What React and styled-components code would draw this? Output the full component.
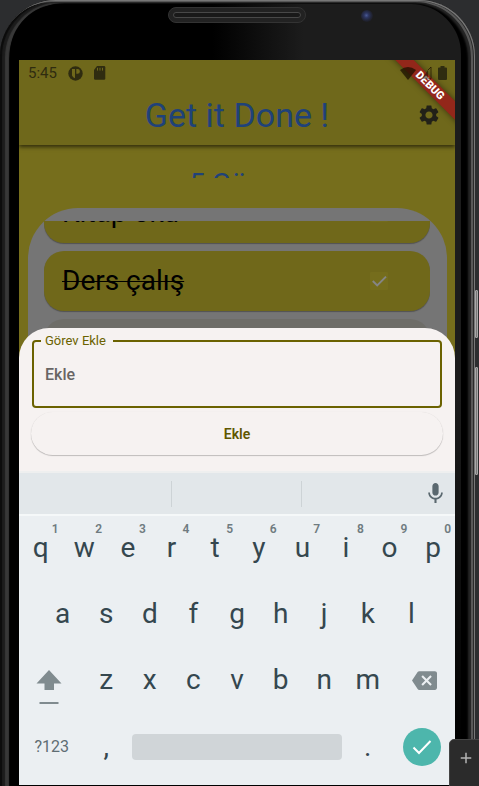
import React from "react";
import styled, { createGlobalStyle } from "styled-components";
import { MdAdd, MdBackspace, MdMic, MdSettings } from "react-icons/md";

const GlobalStyle = createGlobalStyle`
  * {
    box-sizing: border-box;
  }
  body {
    margin: 0;
    background: #2c2d2f;
    font-family: Roboto, sans-serif;
  }
  button,
  input {
    font: inherit;
    color: inherit;
  }
  button {
    border: 0;
    padding: 0;
    background: none;
    cursor: pointer;
  }
  svg {
    display: block;
  }
`;

const Emulator = styled.div`
  position: relative;
  min-height: 100vh;
  padding-right: 4px;
  overflow: hidden;
`;

const Phone = styled.div`
  padding: 4px 14px 0 10px;
  border-radius: 56px 56px 0 0;
  background: #000;
  box-shadow:
    inset -1px 1px 0 #777,
    inset -2px 1px 0 #2a2a2a,
    inset -4px 2px 0 #585858,
    inset -7px 3px 2px #262626,
    inset 2px 1px 1px #0c0c0c,
    inset 5px 2px 1px #1c1c1c,
    inset 9px 3px 1px #383838;
`;

const Face = styled.div`
  padding: 0 6px 1px 9px;
  border-radius: 50px 50px 0 0;
  background:
    linear-gradient(to bottom, transparent 50%, #000 95%),
    linear-gradient(to right, #000 45%, #1c1c1c 65%);
`;

const TopBezel = styled.div`
  display: grid;
  grid-template-columns: 1fr auto 1fr;
  align-items: start;
  height: 56px;
  padding-top: 3px;
`;

const Speaker = styled.div`
  grid-column: 2;
  width: 138px;
  height: 16px;
  padding: 4px;
  border: 1px solid #333;
  border-radius: 8px;
  background: #222;
`;

const SpeakerSlot = styled.div`
  height: 6px;
  border: 1px solid #484848;
  border-radius: 3px;
  background: #191919;
`;

const Camera = styled.div`
  width: 12px;
  height: 12px;
  margin: 3px 0 0 55px;
  border-radius: 50%;
  background: radial-gradient(circle at 45% 45%, #4a5a94 0, #2c3560 25%, #23273c 50%, #1c1c20 75%);
`;

const Screen = styled.main`
  position: relative;
  display: grid;
  overflow: hidden;
  background: #766e1c;
`;

const AppLayer = styled.div`
  grid-area: 1 / 1;
  align-self: start;
`;

const OverlayLayer = styled.div`
  grid-area: 1 / 1;
  z-index: 2;
  padding-top: 268px;
`;

const AppBar = styled.header`
  background: #6f681b;
  box-shadow: 0 2px 4px rgba(0, 0, 0, 0.6);
`;

const StatusBar = styled.div`
  position: relative;
  z-index: 1;
  display: flex;
  align-items: center;
  height: 26px;
  padding: 0 8px 0 9px;
  color: #2f2c10;
  font-size: 15px;
`;

const StatusIcons = styled.div`
  display: flex;
  align-items: center;
  gap: ${(p) => (p.$end ? "6px" : "9px")};
  margin-left: ${(p) => (p.$end ? "auto" : "11px")};
`;

const TitleRow = styled.div`
  display: grid;
  grid-template-columns: 1fr auto 1fr;
  align-items: center;
  height: 59px;
  padding: 0 14px 2px;
`;

const Title = styled.h1`
  grid-column: 2;
  margin: 0;
  color: #1f4279;
  font-size: 34px;
  font-weight: 400;
  line-height: 40px;
`;

const SettingsButton = styled.button`
  justify-self: end;
  color: #222118;
`;

const DebugBanner = styled.div`
  position: absolute;
  top: 19px;
  right: -35px;
  width: 120px;
  height: 13px;
  transform: rotate(45deg);
  background: #93271a;
  box-shadow: 0 0 6px rgba(0, 0, 0, 0.5);
  color: #fff;
  font-size: 11px;
  font-weight: 900;
  line-height: 13px;
  text-align: center;
`;

const Counter = styled.p`
  height: 8px;
  margin: 25px 0 30px;
  overflow: hidden;
  color: #1f4279;
  font-size: 28px;
  line-height: 28px;
  text-align: center;
`;

const Panel = styled.section`
  margin: 0 8px 0 9px;
  padding: 13px 17px 0 16px;
  border-radius: 50px 50px 0 0;
  background: #757575;
`;

const TaskList = styled.ul`
  display: flex;
  flex-direction: column;
  justify-content: flex-end;
  gap: 8px;
  height: 158px;
  margin: 0;
  padding: 0;
  overflow: hidden;
  list-style: none;
`;

const Task = styled.li`
  display: flex;
  flex: none;
  align-items: center;
  justify-content: space-between;
  height: 60px;
  padding: 0 42px 0 18px;
  border-radius: 20px;
  background: ${(p) => (p.$plain ? "#6e6d68" : "#70681a")};
  box-shadow: 0 1px 1px rgba(0, 0, 0, ${(p) => (p.$plain ? 0 : 0.3)});
  color: #000;
  font-size: 28px;
`;

const TaskName = styled.label`
  padding-bottom: 1px;
  text-decoration: ${(p) => (p.$done ? "line-through" : "none")};
  text-decoration-thickness: 1px;
`;

const Tick = styled.span`
  display: grid;
  width: 18px;
  height: 18px;

  > * {
    grid-area: 1 / 1;
  }
`;

const TickInput = styled.input`
  width: 18px;
  height: 18px;
  margin: 0;
  appearance: none;
  border-radius: 1px;
  background: #756d1c;
`;

const TickMark = styled.svg`
  pointer-events: none;
`;

const Sheet = styled.form`
  padding: 7px 12px 16px;
  border-radius: 30px 30px 0 0;
  background: #f6f2f1;
`;

const Field = styled.fieldset`
  min-width: 0;
  margin: 0 1px 4px;
  padding: 0 11px;
  border: 2px solid #6b6200;
  border-radius: 4px;
`;

const FieldLegend = styled.legend`
  margin-left: -4px;
  padding: 0 7px 0 4px;
  color: #6b6200;
  font-size: 13px;
  line-height: 12px;
`;

const FieldInput = styled.input`
  display: block;
  width: 100%;
  height: 59px;
  padding: 0 0 4px;
  border: 0;
  outline: 0;
  background: none;
  color: #333;
  font-size: 16px;
  font-weight: 500;

  &::placeholder {
    color: #686564;
    opacity: 1;
  }
`;

const SubmitButton = styled.button`
  display: block;
  width: 100%;
  height: 43px;
  border-radius: 22px;
  background: #f6f2f1;
  box-shadow: 0 1px 1px rgba(0, 0, 0, 0.22), 0 0 1px rgba(0, 0, 0, 0.1);
  color: #5f5700;
  font-size: 14px;
  font-weight: 600;
`;

const Keyboard = styled.section`
  padding-bottom: 5px;
  background: #ebeff2;
  color: #35474f;
`;

const Suggestions = styled.div`
  display: grid;
  grid-template-columns: 35% 30% 35%;
  align-items: center;
  height: 45px;
  border-top: 2px solid #eeefef;
  border-bottom: 2px solid #f5f8f9;
  background: #e2e7ea;
`;

const Suggestion = styled.div`
  display: flex;
  align-items: center;
  justify-content: flex-end;
  height: 26px;
  padding-right: 7px;
  border-right: 1px solid #cdd3d6;

  &:last-child {
    border-right: 0;
  }
`;

const MicButton = styled.button`
  color: #5a686f;
`;

const KeyRow = styled.div`
  display: grid;
  grid-template-columns: repeat(20, 1fr);
  height: 66px;
  padding-bottom: ${(p) => (p.$last ? "0" : "2px")};
`;

const Key = styled.button`
  position: relative;
  display: flex;
  flex-direction: column;
  align-items: center;
  justify-content: center;
  grid-column: ${(p) => (p.$start ? `${p.$start} / ` : "")} span ${(p) => p.$span || 2};
  padding: ${(p) => (p.$edge === "left" ? "0 5px 0 0" : p.$edge === "right" ? "0 0 0 5px" : "0")};
  color: ${(p) => (p.$muted ? "#5f6d73" : "inherit")};
  font-size: ${(p) => (p.$muted ? "16px" : "28px")};
  line-height: 28px;
`;

const Hint = styled.span`
  position: absolute;
  top: 6px;
  right: 4px;
  color: #6f7b80;
  font-size: 12px;
  font-weight: 600;
  line-height: 14px;
`;

const SpaceBar = styled.span`
  align-self: stretch;
  height: 26px;
  margin: 0 4px;
  border-radius: 4px;
  background: #d0d5d8;
`;

const EnterCircle = styled.span`
  display: grid;
  place-items: center;
  width: 38px;
  height: 38px;
  border-radius: 50%;
  background: #4db6ac;
`;

const SideButton = styled.div`
  position: absolute;
  top: ${(p) => p.$top};
  right: 1px;
  width: 3px;
  height: ${(p) => p.$length};
  border: 1px solid #a8a8a8;
  border-radius: 1px;
  background: #777;
`;

const ZoomButton = styled.button`
  position: absolute;
  right: -2px;
  bottom: -2px;
  z-index: 3;
  display: grid;
  place-items: center;
  width: 32px;
  height: 49px;
  padding: 0 0 12px 2px;
  border: 1px solid #444;
  border-radius: 5px 0 0 0;
  background: #2b2b2b;
  color: #b4b4b4;
`;

const TASKS = [
  { id: "kitap", name: "Kitap oku", done: false },
  { id: "ders", name: "Ders çalış", done: true },
  { id: "bos", name: "", plain: true },
];

function TaskItem({ id, name, done, plain }) {
  if (plain) return <Task $plain />;
  return (
    <Task>
      <TaskName htmlFor={id} $done={done}>
        {name}
      </TaskName>
      <Tick>
        <TickInput id={id} type="checkbox" defaultChecked={done} />
        {done && (
          <TickMark width="18" height="18" viewBox="0 0 18 18" fill="none" stroke="#858585" strokeWidth="2">
            <path d="M2.8 9 7.2 13.4 16 4.6" />
          </TickMark>
        )}
      </Tick>
    </Task>
  );
}

function LetterKeys({ letters, start, hints = "" }) {
  return [...letters].map((letter, i) => (
    <Key key={letter} type="button" $start={i === 0 ? start : undefined}>
      {letter}
      {hints[i] && <Hint>{hints[i]}</Hint>}
    </Key>
  ));
}

export default function App() {
  return (
    <Emulator>
      <GlobalStyle />
      <Phone>
        <Face>
          <TopBezel>
            <Speaker>
              <SpeakerSlot />
            </Speaker>
            <Camera />
          </TopBezel>
          <Screen>
            <AppLayer>
              <DebugBanner>DEBUG</DebugBanner>
              <AppBar>
                <StatusBar>
                  <span>5:45</span>
                  <StatusIcons>
                    <svg width="15" height="15" viewBox="0 0 15 15">
                      <circle cx="7.5" cy="7.5" r="7.2" fill="#2f2c10" />
                      <path d="M4 3h3v9.200A5 5 0 0 1 4 9.500ZM8.300 3h1.200a2.400 2.400 0 0 1 0 4.800H8.300Z" fill="#6f681b" />
                    </svg>
                    <svg width="14" height="14" viewBox="0 0 14 14">
                      <path d="M5 0h7q1.300 0 1.300 1.300v11.200q0 1.300-1.300 1.300H3.300q-1.300 0-1.300-1.300V4Z" fill="#2f2c10" />
                      <path d="M5.500 1.800v2.800M8 1.800v2.800M10.500 1.800v2.800" stroke="#6f681b" />
                    </svg>
                  </StatusIcons>
                  <StatusIcons $end>
                    <svg width="16" height="13" viewBox="0 0 16 13">
                      <path d="M0 3Q8-3 16 3L8 13Z" fill="#1c1000" fillOpacity=".75" />
                    </svg>
                    <svg width="10" height="14" viewBox="0 0 10 14">
                      <path d="M0 12.800 6 4v8.800Z" fill="#1c1000" fillOpacity=".55" />
                      <path d="M6 4 9 1v11.800H6" fill="none" stroke="#1c1000" strokeOpacity=".7" />
                    </svg>
                    <svg width="9" height="14" viewBox="0 0 9 14">
                      <path d="M2.500 0h4v1.500H8q1 0 1 1V13q0 1-1 1H1q-1 0-1-1V2.500q0-1 1-1h1.500Z" fill="#2f2c10" />
                    </svg>
                  </StatusIcons>
                </StatusBar>
                <TitleRow>
                  <Title>Get it Done !</Title>
                  <SettingsButton type="button" aria-label="Ayarlar">
                    <MdSettings size={24} />
                  </SettingsButton>
                </TitleRow>
              </AppBar>
              <Counter>5 Görev</Counter>
              <Panel>
                <TaskList>
                  {TASKS.map((task) => (
                    <TaskItem key={task.id} {...task} />
                  ))}
                </TaskList>
              </Panel>
            </AppLayer>
            <OverlayLayer>
              <Sheet onSubmit={(e) => e.preventDefault()}>
                <Field>
                  <FieldLegend>
                    <label htmlFor="new-task">Görev Ekle</label>
                  </FieldLegend>
                  <FieldInput id="new-task" placeholder="Ekle" />
                </Field>
                <SubmitButton type="submit">Ekle</SubmitButton>
              </Sheet>
              <Keyboard>
                <Suggestions>
                  <Suggestion />
                  <Suggestion />
                  <Suggestion>
                    <MicButton type="button" aria-label="Sesle yaz">
                      <MdMic size={25} />
                    </MicButton>
                  </Suggestion>
                </Suggestions>
                <KeyRow>
                  <LetterKeys letters="qwertyuiop" hints="1234567890" />
                </KeyRow>
                <KeyRow>
                  <LetterKeys letters="asdfghjkl" start={2} />
                </KeyRow>
                <KeyRow>
                  <Key type="button" $span={3} $edge="left" aria-label="Shift">
                    <svg width="26" height="50" viewBox="0 0 26 50" fill="#808b8f">
                      <path d="M13 15 25.500 28.500H18V35H8.500V28.500H.500ZM3.500 47h19v2h-19Z" />
                    </svg>
                  </Key>
                  <LetterKeys letters="zxcvbnm" />
                  <Key type="button" $span={3} $edge="right" aria-label="Sil">
                    <MdBackspace size={25} color="#808b8f" />
                  </Key>
                </KeyRow>
                <KeyRow $last>
                  <Key type="button" $span={3} $muted>
                    ?123
                  </Key>
                  <Key type="button">,</Key>
                  <Key type="button" $span={10} aria-label="Boşluk">
                    <SpaceBar />
                  </Key>
                  <Key type="button">.</Key>
                  <Key type="button" $span={3} aria-label="Tamam">
                    <EnterCircle>
                      <svg width="20" height="16" viewBox="0 0 20 16" fill="none" stroke="#fff" strokeWidth="2">
                        <path d="M1.500 8.500 7 14 18.500 2" />
                      </svg>
                    </EnterCircle>
                  </Key>
                </KeyRow>
              </Keyboard>
            </OverlayLayer>
          </Screen>
        </Face>
      </Phone>
      <SideButton $top="290px" $length="48px" />
      <SideButton $top="367px" $length="108px" />
      <ZoomButton type="button" aria-label="Ekle">
        <MdAdd size={18} />
      </ZoomButton>
    </Emulator>
  );
}
